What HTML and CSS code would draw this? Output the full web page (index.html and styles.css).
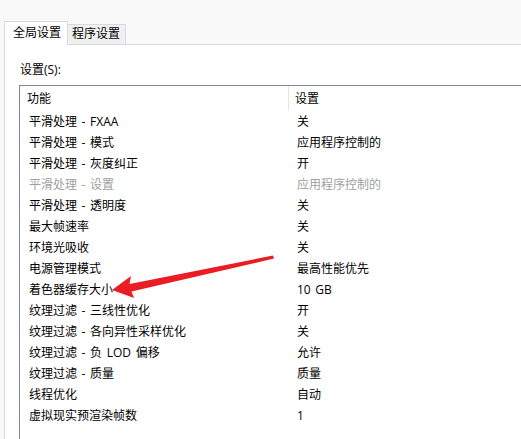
FILE: index.html
```html
<!DOCTYPE html>
<html lang="zh-CN">
<head>
    <meta charset="UTF-8">
    <title>NVIDIA 控制面板</title>

    <link rel="stylesheet" href="styles.css">
</head>
<body>

<div class="tabs">
    <div class="tab active">全局设置</div>
    <div class="tab">程序设置</div>
</div>

<div class="panel">
    <div class="label">设置(S):</div>

    <div class="list">
        <div class="head">
            <div class="cell">功能</div>
            <div class="cell">设置</div>
        </div>
        <div class="row"><div class="cell">平滑处理 - FXAA</div><div class="cell">关</div></div>
        <div class="row"><div class="cell">平滑处理 - 模式</div><div class="cell">应用程序控制的</div></div>
        <div class="row"><div class="cell">平滑处理 - 灰度纠正</div><div class="cell">开</div></div>
        <div class="row off"><div class="cell">平滑处理 - 设置</div><div class="cell">应用程序控制的</div></div>
        <div class="row"><div class="cell">平滑处理 - 透明度</div><div class="cell">关</div></div>
        <div class="row"><div class="cell">最大帧速率</div><div class="cell">关</div></div>
        <div class="row"><div class="cell">环境光吸收</div><div class="cell">关</div></div>
        <div class="row"><div class="cell">电源管理模式</div><div class="cell">最高性能优先</div></div>
        <div class="row"><div class="cell">着色器缓存大小</div><div class="cell">10 GB</div></div>
        <div class="row"><div class="cell">纹理过滤 - 三线性优化</div><div class="cell">开</div></div>
        <div class="row"><div class="cell">纹理过滤 - 各向异性采样优化</div><div class="cell">关</div></div>
        <div class="row"><div class="cell">纹理过滤 - 负 LOD 偏移</div><div class="cell">允许</div></div>
        <div class="row"><div class="cell">纹理过滤 - 质量</div><div class="cell">质量</div></div>
        <div class="row"><div class="cell">线程优化</div><div class="cell">自动</div></div>
        <div class="row"><div class="cell">虚拟现实预渲染帧数</div><div class="cell">1</div></div>
    </div>
</div>

<!-- red arrow pointing at the shader cache row -->
<svg class="arrow" width="521" height="439" viewBox="0 0 521 439">
    <polygon points="112,290 131,276 129.5,284 273,255.5 274,258.5 131.5,291.5 134,298" fill="#ea1c24"/>
</svg>

</body>
</html>
```

FILE: styles.css
```css
* {
    margin: 0;
    padding: 0;
    box-sizing: border-box;
}

html, body {
    height: 100%;
}

body {
    position: relative;
    display: flex;
    flex-direction: column;
    overflow: hidden;
    background: #f9f9f9;
    font-family: "Open Sans", "Noto Sans CJK SC", sans-serif;
    font-size: 12px;
    color: #000;
}

.tabs {
    display: flex;
    align-items: flex-end;
    flex: none;
    height: 44px;
    padding-left: 4px;
}

.tab {
    height: 20px;
    line-height: 18px;
    padding: 0 5px 0 4px;
    background: #f0f0f0;
    border: 1px solid #d9d9d9;
    border-left: none;
    border-bottom: none;
}

.tab.active {
    position: relative;
    z-index: 1;
    height: 24px;
    line-height: 22px;
    margin-bottom: -1px;
    padding: 0 6px 0 8px;
    background: #fff;
    border-left: 1px solid #d9d9d9;
}

.panel {
    display: flex;
    flex-direction: column;
    flex: 1;
    min-height: 0;
    margin-left: 4px;
    padding-left: 14px;
    background: #fff;
    border-top: 1px solid #d9d9d9;
    border-left: 1px solid #d9d9d9;
}

.label {
    flex: none;
    padding: 17px 0 0 1px;
    height: 40px;
    line-height: 16px;
}

.list {
    flex: 1;
    min-height: 0;
    overflow: hidden;
    border-top: 1px solid #828790;
    border-left: 1px solid #828790;
}

.head,
.row {
    display: grid;
    grid-template-columns: 268px 1fr;
}

.head {
    height: 25px;
    line-height: 25px;
}

.head .cell:first-child {
    padding-left: 7px;
}

.head .cell:last-child {
    padding-left: 6px;
    border-left: 1px solid #e5e5e5;
}

.row {
    height: 21px;
    line-height: 21px;
    word-spacing: 1.5px;
}

.row .cell:first-child {
    padding-left: 9px;
}

.row .cell:last-child {
    padding-left: 9px;
}

.row.off {
    color: #a0a0a0;
}

.arrow {
    position: absolute;
    top: 0;
    left: 0;
    pointer-events: none;
}
```
